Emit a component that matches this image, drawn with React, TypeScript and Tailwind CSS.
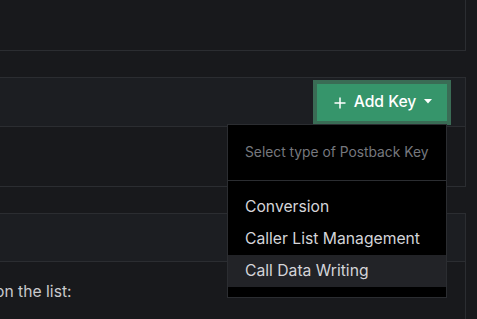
import React from 'react';

const App: React.FC = () => {
  const items = ['Conversion', 'Caller List Management', 'Call Data Writing'];

  return (
    <div className="w-[477px] h-[319px] overflow-hidden bg-[#18191c] font-['Inter','Noto_Sans',sans-serif]">
      <div className="flex flex-col gap-[26px] ml-[-12px] mt-[-20px] mr-[11px]">
        {/* top panel, mostly scrolled out */}
        <div className="h-[71px] border border-[#2b2d31] bg-[#18191c]" />

        {/* postback keys panel */}
        <div className="border border-[#2b2d31] bg-[#18191c]">
          <div className="h-[49px] bg-[#1c1e22] border-b border-[#2b2d31] flex items-center justify-end pr-[18px]">
            <div className="relative">
              <button className="h-[37px] w-[130px] flex items-center justify-center gap-[8px] pl-[2px] bg-[#36956b] text-white text-[15.7px] font-medium ring-[4px] ring-[#3a6c55]">
                <svg width="12" height="12" viewBox="0 0 12 12" className="mt-[1px]">
                  <path d="M6 0.5v11M0.5 6h11" stroke="white" strokeWidth="1.5" />
                </svg>
                <span className="flex items-center gap-[8px]">
                  Add Key
                  <svg width="8" height="5" viewBox="0 0 8 5">
                    <path d="M0 0h8L4 4.5z" fill="white" />
                  </svg>
                </span>
              </button>

              {/* dropdown menu */}
              <div className="absolute right-0 top-full mt-[3px] w-[220px] bg-black border border-[#2b2d31] z-10">
                <div className="h-[56px] border-b border-[#2b2d31] flex items-center pt-[1px] px-[17px] text-[13.8px] text-[#76787e]">
                  Select type of Postback Key
                </div>
                <div className="py-[10px]">
                  {items.map((item, i) => (
                    <div
                      key={item}
                      className={`h-[32px] flex items-center pt-[1px] px-[17px] text-[15.7px] text-[#d4d5d9] ${
                        i === 2 ? 'bg-[#222327]' : ''
                      }`}
                    >
                      {item}
                    </div>
                  ))}
                </div>
              </div>
            </div>
          </div>
          <div className="h-[59px]" />
        </div>

        {/* caller list panel */}
        <div className="border border-[#2b2d31] bg-[#18191c]">
          <div className="h-[48px] bg-[#1c1e22] border-b border-[#2b2d31]" />
          <div className="h-[80px] pt-[18px] pl-[6px] text-[15.7px] text-[#c9cacd]">
            on the list:
          </div>
        </div>
      </div>
    </div>
  );
};

export default App;
